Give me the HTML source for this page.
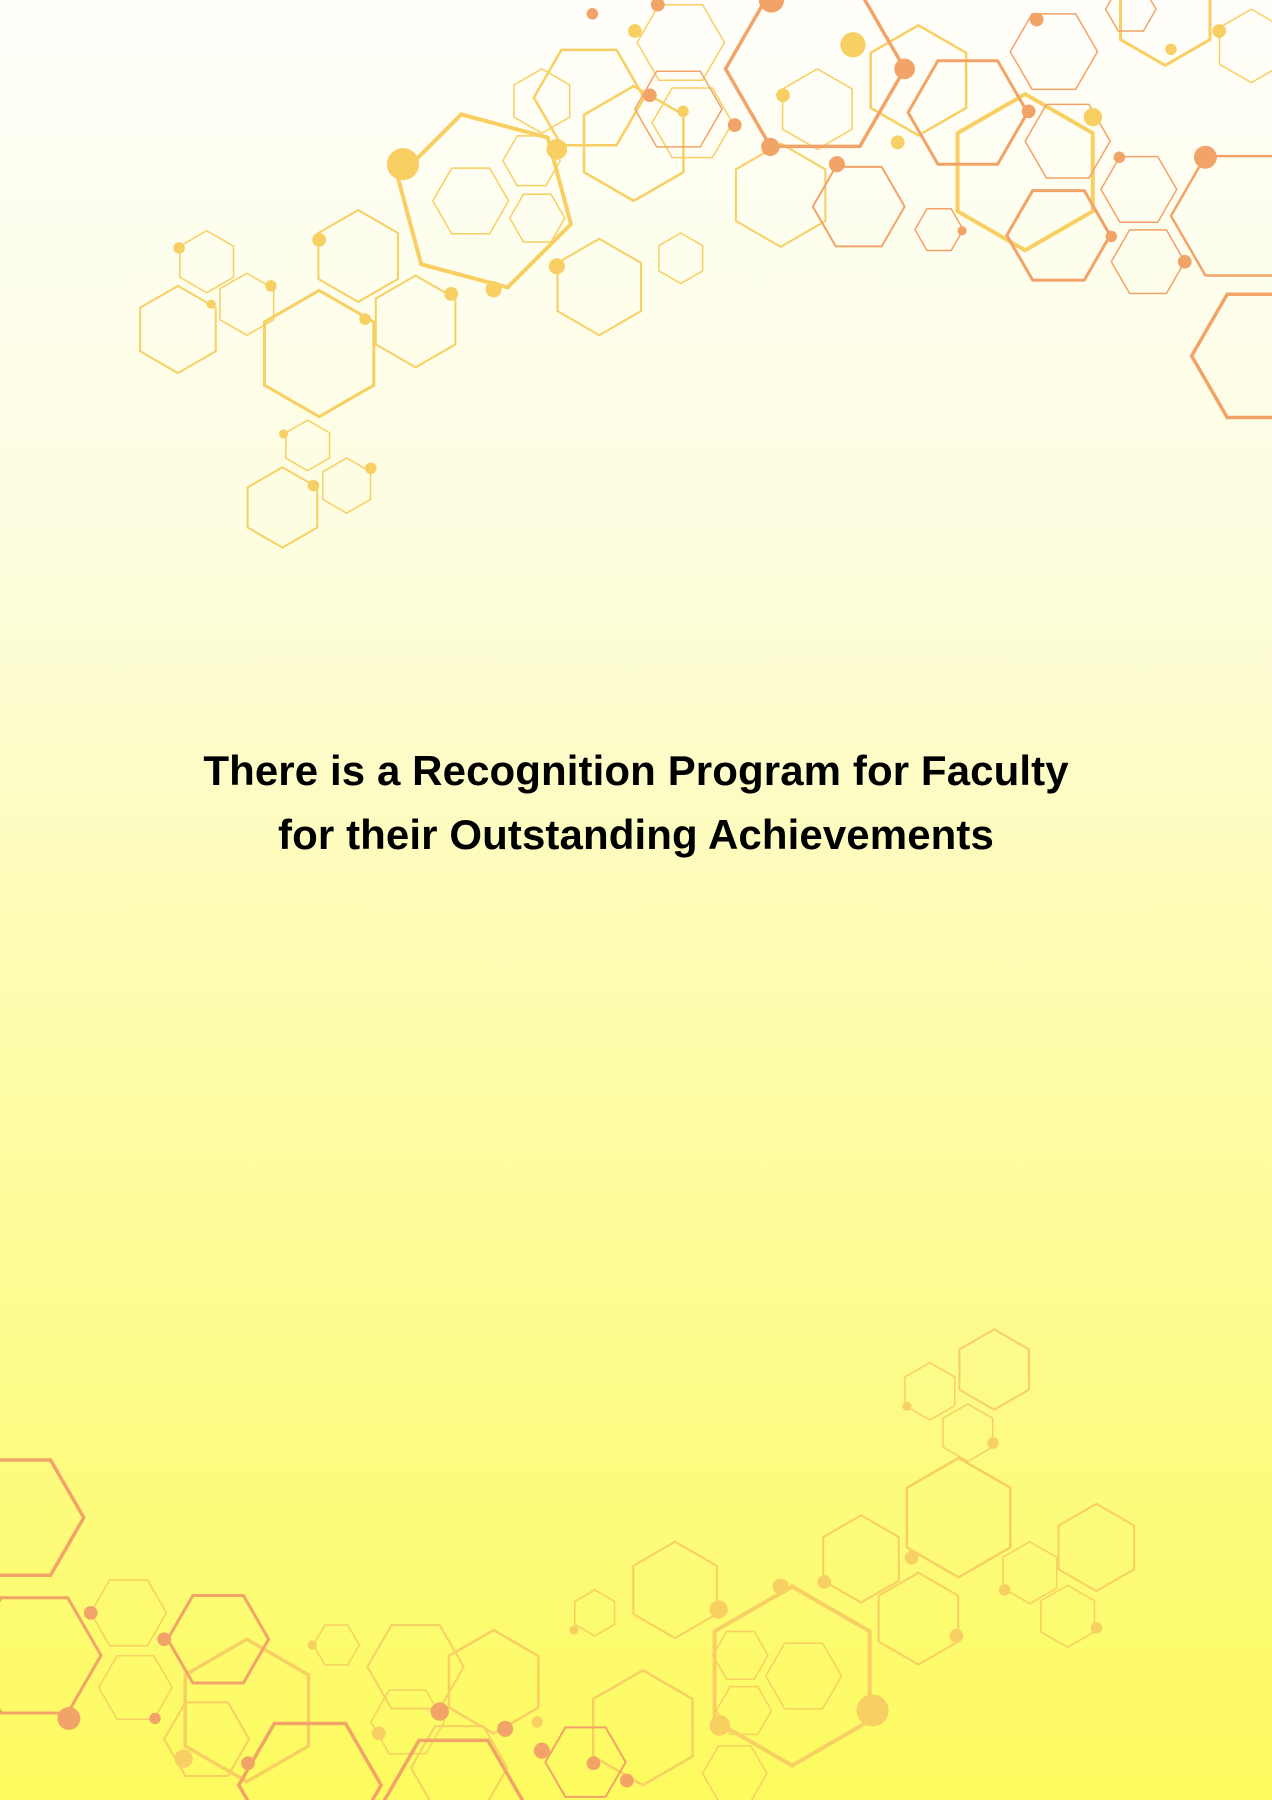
<!DOCTYPE html>
<html><head><meta charset="utf-8"><style>
html,body{margin:0;padding:0}
body{width:1272px;height:1800px;position:relative;overflow:hidden;background:linear-gradient(to bottom,#fffefa 0%,#fdfde0 30%,#fdfcb8 50%,#fdfb8c 75%,#fdfb5e 100%)}
svg{position:absolute;left:0;top:0}
.t{position:absolute;left:0;width:1272px;text-align:center;font-family:"Liberation Sans",Arial,sans-serif;font-weight:bold;font-size:42px;color:#000;letter-spacing:0.1px}
</style></head><body>
<svg width="1272" height="1800" viewBox="0 0 1108 1568" preserveAspectRatio="none">
<defs><polygon id="h" fill="none" vector-effect="non-scaling-stroke" points="1,0 0.5,0.866 -0.5,0.866 -1,0 -0.5,-0.866 0.5,-0.866"/></defs>
<g fill="none" stroke="#f8cf62">
<use href="#h" stroke-width="4" transform="translate(422,175) rotate(15) scale(78)"/>
<use href="#h" stroke-width="1.5" transform="translate(410,175) scale(33)"/>
<use href="#h" stroke-width="1.5" transform="translate(463,140) scale(25)"/>
<use href="#h" stroke-width="1.5" transform="translate(468,190) scale(24)"/>
<use href="#h" stroke-width="2" transform="translate(522,250) rotate(30) scale(42)"/>
<use href="#h" stroke-width="2.5" transform="translate(552,125) rotate(30) scale(50)"/>
<use href="#h" stroke-width="2.5" transform="translate(513,85) scale(48)"/>
<use href="#h" stroke-width="1.5" transform="translate(593,37) scale(38)"/>
<use href="#h" stroke-width="1.5" transform="translate(603,107) scale(35)"/>
<use href="#h" stroke-width="1.5" transform="translate(472,88) rotate(30) scale(28)"/>
<use href="#h" stroke-width="1.5" transform="translate(712,95) rotate(30) scale(35)"/>
<use href="#h" stroke-width="2" transform="translate(680,170) rotate(30) scale(45)"/>
<use href="#h" stroke-width="2.5" transform="translate(800,70) rotate(30) scale(48)"/>
<use href="#h" stroke-width="4" transform="translate(893,150) rotate(30) scale(68)"/>
<use href="#h" stroke-width="3" transform="translate(1015,12) rotate(30) scale(45)"/>
<use href="#h" stroke-width="1.5" transform="translate(1090,40) rotate(30) scale(32)"/>
<use href="#h" stroke-width="1.5" transform="translate(593,225) rotate(30) scale(22)"/>
<use href="#h" stroke-width="2" transform="translate(312,223) rotate(30) scale(40)"/>
<use href="#h" stroke-width="2" transform="translate(362,280) rotate(30) scale(40)"/>
<use href="#h" stroke-width="3" transform="translate(278,308) rotate(30) scale(55)"/>
<use href="#h" stroke-width="2" transform="translate(155,287) rotate(30) scale(38)"/>
<use href="#h" stroke-width="1.5" transform="translate(180,228) rotate(30) scale(27)"/>
<use href="#h" stroke-width="1.5" transform="translate(215,265) rotate(30) scale(27)"/>
<use href="#h" stroke-width="1.5" transform="translate(268,388) rotate(30) scale(22)"/>
<use href="#h" stroke-width="1.5" transform="translate(302,423) rotate(30) scale(24)"/>
<use href="#h" stroke-width="2" transform="translate(246,442) rotate(30) scale(35)"/>
<use href="#h" stroke-width="1.5" transform="translate(112,1405) scale(33)"/>
<use href="#h" stroke-width="1.5" transform="translate(118,1470) scale(32)"/>
<use href="#h" stroke-width="3.5" transform="translate(215,1490) rotate(30) scale(62)"/>
<use href="#h" stroke-width="2" transform="translate(180,1515) scale(37)"/>
<use href="#h" stroke-width="1.5" transform="translate(293,1433) scale(20)"/>
<use href="#h" stroke-width="2" transform="translate(362,1452) scale(42)"/>
<use href="#h" stroke-width="2.5" transform="translate(430,1465) rotate(30) scale(45)"/>
<use href="#h" stroke-width="1.5" transform="translate(355,1500) scale(32)"/>
<use href="#h" stroke-width="2" transform="translate(400,1540) scale(42)"/>
<use href="#h" stroke-width="1.5" transform="translate(518,1405) rotate(30) scale(20)"/>
<use href="#h" stroke-width="2.5" transform="translate(560,1505) rotate(30) scale(50)"/>
<use href="#h" stroke-width="2" transform="translate(588,1385) rotate(30) scale(42)"/>
<use href="#h" stroke-width="4" transform="translate(690,1460) rotate(30) scale(78)"/>
<use href="#h" stroke-width="1.5" transform="translate(700,1460) scale(33)"/>
<use href="#h" stroke-width="1.5" transform="translate(645,1442) scale(24)"/>
<use href="#h" stroke-width="1.5" transform="translate(648,1490) scale(24)"/>
<use href="#h" stroke-width="2" transform="translate(750,1358) rotate(30) scale(38)"/>
<use href="#h" stroke-width="2.5" transform="translate(835,1322) rotate(30) scale(52)"/>
<use href="#h" stroke-width="2" transform="translate(800,1410) rotate(30) scale(40)"/>
<use href="#h" stroke-width="1.5" transform="translate(810,1212) rotate(30) scale(25)"/>
<use href="#h" stroke-width="2" transform="translate(866,1193) rotate(30) scale(35)"/>
<use href="#h" stroke-width="1.5" transform="translate(843,1248) rotate(30) scale(25)"/>
<use href="#h" stroke-width="1.5" transform="translate(897,1370) rotate(30) scale(27)"/>
<use href="#h" stroke-width="2" transform="translate(955,1348) rotate(30) scale(38)"/>
<use href="#h" stroke-width="1.5" transform="translate(930,1408) rotate(30) scale(27)"/>
<use href="#h" stroke-width="1.5" transform="translate(640,1545) scale(28)"/>
</g>
<g fill="none" stroke="#f2a468">
<use href="#h" stroke-width="3.5" transform="translate(710,60) scale(78)"/>
<use href="#h" stroke-width="2" transform="translate(748,180) scale(40)"/>
<use href="#h" stroke-width="3" transform="translate(843,98) scale(52)"/>
<use href="#h" stroke-width="3" transform="translate(922,205) scale(45)"/>
<use href="#h" stroke-width="1.5" transform="translate(930,123) scale(37)"/>
<use href="#h" stroke-width="1.5" transform="translate(918,45) scale(38)"/>
<use href="#h" stroke-width="1.5" transform="translate(992,165) scale(33)"/>
<use href="#h" stroke-width="1.5" transform="translate(1000,228) scale(32)"/>
<use href="#h" stroke-width="2.5" transform="translate(1080,188) scale(60)"/>
<use href="#h" stroke-width="3.5" transform="translate(1100,310) scale(62)"/>
<use href="#h" stroke-width="1.5" transform="translate(818,200) scale(21)"/>
<use href="#h" stroke-width="1.5" transform="translate(985,8) scale(22)"/>
<use href="#h" stroke-width="1.5" transform="translate(591,95) scale(38)"/>
<use href="#h" stroke-width="3.5" transform="translate(15,1322) scale(58)"/>
<use href="#h" stroke-width="3" transform="translate(30,1442) scale(58)"/>
<use href="#h" stroke-width="3" transform="translate(190,1428) scale(44)"/>
<use href="#h" stroke-width="3.5" transform="translate(270,1555) scale(62)"/>
<use href="#h" stroke-width="3.5" transform="translate(395,1568) scale(60)"/>
<use href="#h" stroke-width="2" transform="translate(510,1535) scale(35)"/>
</g>
<g fill="#f8cf62">
<circle cx="351" cy="143" r="14"/><circle cx="430" cy="252" r="7"/><circle cx="485" cy="130" r="9"/><circle cx="743" cy="39" r="11"/><circle cx="595" cy="97" r="5"/><circle cx="782" cy="124" r="6"/><circle cx="952" cy="102" r="8"/><circle cx="1020" cy="43" r="5"/><circle cx="1062" cy="27" r="6"/><circle cx="553" cy="27" r="6"/><circle cx="278" cy="209" r="6"/><circle cx="318" cy="278" r="5"/><circle cx="393" cy="256" r="6"/><circle cx="156" cy="216" r="5"/><circle cx="236" cy="249" r="5"/><circle cx="184" cy="265" r="4"/><circle cx="485" cy="232" r="7"/><circle cx="323" cy="408" r="5"/><circle cx="273" cy="423" r="5"/><circle cx="247" cy="378" r="4"/><circle cx="682" cy="83" r="6"/>
<circle cx="760" cy="1490" r="14"/><circle cx="680" cy="1382" r="7"/><circle cx="626" cy="1402" r="8"/><circle cx="627" cy="1503" r="9"/><circle cx="718" cy="1378" r="6"/><circle cx="794" cy="1357" r="6"/><circle cx="833" cy="1425" r="6"/><circle cx="955" cy="1418" r="5"/><circle cx="875" cy="1385" r="5"/><circle cx="790" cy="1225" r="4"/><circle cx="865" cy="1257" r="5"/><circle cx="160" cy="1532" r="8"/><circle cx="330" cy="1510" r="6"/><circle cx="272" cy="1433" r="4"/><circle cx="500" cy="1420" r="4"/><circle cx="468" cy="1500" r="5"/>
</g>
<g fill="#f2a468">
<circle cx="672" cy="0" r="11"/><circle cx="788" cy="60" r="9"/><circle cx="671" cy="128" r="8"/><circle cx="729" cy="143" r="7"/><circle cx="566" cy="83" r="6"/><circle cx="640" cy="109" r="6"/><circle cx="903" cy="17" r="6"/><circle cx="896" cy="97" r="6"/><circle cx="968" cy="206" r="5"/><circle cx="975" cy="137" r="5"/><circle cx="1050" cy="137" r="10"/><circle cx="1032" cy="228" r="6"/><circle cx="838" cy="201" r="4"/><circle cx="516" cy="12" r="5"/><circle cx="573" cy="4" r="6"/>
<circle cx="60" cy="1497" r="10"/><circle cx="79" cy="1405" r="6"/><circle cx="143" cy="1428" r="6"/><circle cx="135" cy="1497" r="5"/><circle cx="216" cy="1536" r="6"/><circle cx="383" cy="1491" r="8"/><circle cx="440" cy="1506" r="7"/><circle cx="472" cy="1525" r="7"/><circle cx="517" cy="1536" r="6"/><circle cx="546" cy="1551" r="6"/>
</g>
</svg>
<div class="t" style="top:747px">There is a Recognition Program for Faculty</div>
<div class="t" style="top:811px">for their Outstanding Achievements</div>
</body></html>
